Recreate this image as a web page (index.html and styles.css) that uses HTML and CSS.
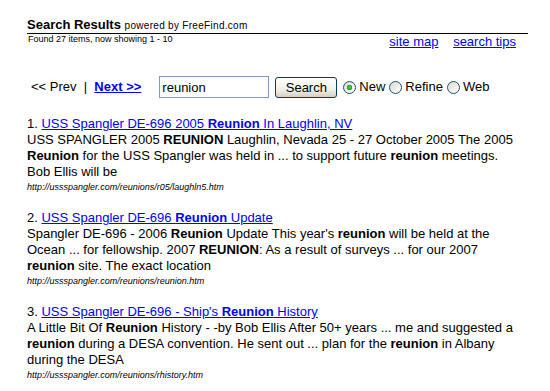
FILE: index.html
```html
<!DOCTYPE html>
<html lang="en">

<head>
  <meta charset="UTF-8" />
  <title>Search Results</title>
  <link rel="stylesheet" href="styles.css">
</head>

<body>
  <div class="page">
    <div class="header">
      Search Results <span class="powered">powered by FreeFind.com</span>
    </div>
    <div class="header-sub">
      <span class="found">Found 27 items, now showing 1 - 10</span>
      <span class="tools">
        <a href="#">site map</a>
        <a href="#">search tips</a>
      </span>
    </div>

    <form class="search-row" onsubmit="return false">
      <span class="pager">&lt;&lt; Prev &nbsp;|&nbsp; <a href="#" class="next">Next &gt;&gt;</a></span>
      <input type="text" class="query" value="reunion" />
      <button type="submit" class="search-btn">Search</button>
      <label class="opt"><input type="radio" name="mode" checked /> New</label>
      <label class="opt"><input type="radio" name="mode" /> Refine</label>
      <label class="opt"><input type="radio" name="mode" /> Web</label>
    </form>

    <div class="results">
      <div class="result">
        1. <a href="#">USS Spangler DE-696 2005 <b>Reunion</b> In Laughlin, NV</a><br>
        USS SPANGLER 2005 <b>REUNION</b> Laughlin, Nevada 25 - 27 October 2005 The 2005 <b>Reunion</b> for the USS Spangler was held in ... to support future <b>reunion</b> meetings. Bob Ellis will be
        <div class="url">http://ussspangler.com/reunions/r05/laughln5.htm</div>
      </div>

      <div class="result">
        2. <a href="#">USS Spangler DE-696 <b>Reunion</b> Update</a><br>
        Spangler DE-696 - 2006 <b>Reunion</b> Update This year's <b>reunion</b> will be held at the Ocean ... for fellowship. 2007 <b>REUNION</b>: As a result of surveys ... for our 2007 <b>reunion</b> site. The exact location
        <div class="url">http://ussspangler.com/reunions/reunion.htm</div>
      </div>

      <div class="result">
        3. <a href="#">USS Spangler DE-696 - Ship's <b>Reunion</b> History</a><br>
        A Little Bit Of <b>Reunion</b> History - -by Bob Ellis After 50+ years ... me and suggested a <b>reunion</b> during a DESA convention. He sent out ... plan for the <b>reunion</b> in Albany during the DESA
        <div class="url">http://ussspangler.com/reunions/rhistory.htm</div>
      </div>
    </div>
  </div>
</body>

</html>
```

FILE: styles.css
```css
body {
  margin: 0;
  background: white;
  color: black;
  font-family: "Liberation Sans", Arial, sans-serif;
  font-size: 13px;
  line-height: 16px;
}

a {
  color: #0000ff;
}

.page {
  width: 501px;
  margin-left: 27px;
  padding-top: 17px;
}

.header {
  font-weight: bold;
  height: 16px;
  border-bottom: 1px solid black;
}

.powered {
  font-weight: normal;
  font-size: 10px;
  letter-spacing: 0.3px;
}

.header-sub {
  display: flex;
  justify-content: space-between;
  align-items: flex-start;
}

.found {
  font-size: 9px;
  line-height: 11px;
  padding-left: 1px;
}

.tools {
  padding-right: 12px;
}

.tools a {
  margin-left: 11px;
}

.search-row {
  display: flex;
  align-items: center;
  margin: 26px 0 0 4px;
  height: 22px;
}

.pager {
  margin-right: 18px;
}

.next {
  font-weight: bold;
}

.query {
  box-sizing: border-box;
  width: 110px;
  height: 22px;
  margin: 0 6px 0 0;
  padding: 0 2px;
  border: 1px solid #7f9db9;
  font-family: inherit;
  font-size: 13px;
}

.search-btn {
  box-sizing: border-box;
  width: 62px;
  height: 21px;
  margin: 0 6px 0 0;
  padding: 0;
  border: 1px solid #003c74;
  border-radius: 3px;
  background: linear-gradient(#ffffff, #f0f0ea 60%, #d6d0c5);
  font-family: inherit;
  font-size: 13px;
  color: black;
}

.opt {
  display: flex;
  align-items: center;
  margin-right: 4px;
}

.opt input {
  appearance: none;
  -webkit-appearance: none;
  box-sizing: border-box;
  width: 13px;
  height: 13px;
  margin: 0 3px 0 0;
  border: 1px solid #1c5180;
  border-radius: 50%;
  background: linear-gradient(135deg, #dcd9cf, #ffffff);
}

.opt input:checked {
  background: radial-gradient(circle, #5ecb5e 0, #21a121 2.5px, transparent 3px),
    linear-gradient(135deg, #dcd9cf, #ffffff);
}

.results {
  width: 490px;
  margin-top: 18px;
}

.result {
  margin-bottom: 16px;
}

.url {
  font-size: 9px;
  font-style: italic;
  line-height: 14px;
}
```
